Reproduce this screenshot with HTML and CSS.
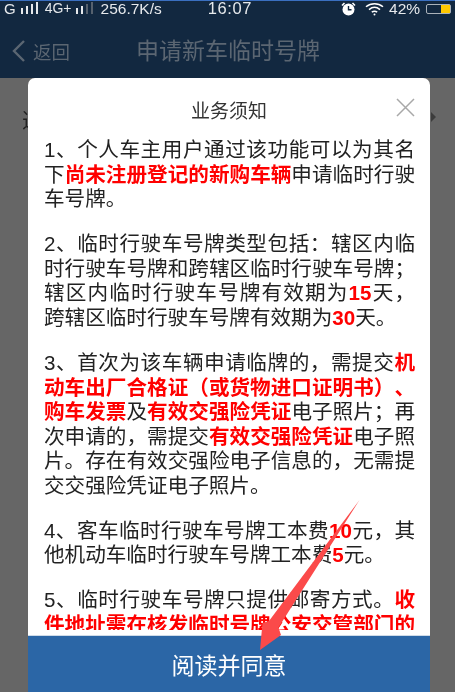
FILE: index.html
```html
<!DOCTYPE html>
<html lang="zh">
<head>
<meta charset="utf-8">
<title>业务须知</title>
<link rel="stylesheet" href="styles.css">
</head>
<body>
<div class="app">
  <header class="top">
    <div class="status">
      <span class="st-g">G</span>
      <svg class="bars bars-a" width="18" height="13" viewBox="0 0 18 13"><rect x="0" y="6" width="2" height="6"/><rect x="5" y="4" width="2" height="8"/><rect x="10" y="2" width="2" height="10"/><rect x="15" y="0" width="2" height="12"/></svg>
      <span class="st-4g">4G+</span>
      <svg class="bars bars-b" width="18" height="13" viewBox="0 0 18 13"><rect x="0" y="6" width="2" height="6"/><rect x="5" y="4" width="2" height="8"/><rect class="off" x="10" y="2" width="2" height="10"/><rect class="off" x="15" y="0" width="2" height="12"/></svg>
      <span class="st-speed">256.7K/s</span>
      <span class="st-time">16:07</span>
      <svg class="st-alarm" width="15" height="14" viewBox="0 0 15 14"><circle cx="7.5" cy="7.5" r="6" fill="#fff"/><path d="M7.5 4v3.8h3" fill="none" stroke="#122840" stroke-width="1.4"/><path d="M1 3.5 3.5 1M14 3.5 11.500 1" stroke="#fff" stroke-width="1.6"/></svg>
      <svg class="st-wifi" width="19" height="14" viewBox="0 0 19 14" fill="none" stroke="#fff" stroke-width="1.5"><path d="M1 4.800C6 .6 13 .6 18 4.800"/><path d="M4 7.600c3.300-2.700 7.700-2.700 11 0"/><path d="M6.800 10.200c1.700-1.300 3.700-1.300 5.400 0"/><circle cx="9.500" cy="12.400" r="1" fill="#fff" stroke="none"/></svg>
      <span class="st-pct">42%</span>
      <span class="battery"><span class="battery-fill"></span></span>
    </div>
    <nav class="nav">
      <svg class="chev" width="14" height="24" viewBox="0 0 14 24" fill="none"><path d="M12 2 2 12l10 10" stroke="#5b6672" stroke-width="2.400"/></svg>
      <span class="back">返回</span>
      <h1 class="nav-title">申请新车临时号牌</h1>
    </nav>
  </header>
  <main class="under">
    <span class="under-text">选</span>
    <span class="under-arrow"></span>
  </main>
  <section class="modal">
    <div class="modal-head">
      <h2 class="modal-title">业务须知</h2>
      <svg class="close" width="19" height="19" viewBox="0 0 19 19"><path d="M1 1l17 17M18 1 1 18" stroke="#a8a8a8" stroke-width="1.500"/></svg>
    </div>
    <div class="modal-body">
      <p class="para">
        <span class="ln">1、个人车主用户通过该功能可以为其名</span>
        <span class="ln">下<b>尚未注册登记的新购车辆</b>申请临时行驶</span>
        <span class="ln end">车号牌。</span>
      </p>
      <p class="para">
        <span class="ln">2、临时行驶车号牌类型包括：辖区内临</span>
        <span class="ln">时行驶车号牌和跨辖区临时行驶车号牌；</span>
        <span class="ln">辖区内临时行驶车号牌有效期为<i>15</i>天，</span>
        <span class="ln end">跨辖区临时行驶车号牌有效期为<i>30</i>天。</span>
      </p>
      <p class="para">
        <span class="ln">3、首次为该车辆申请临牌的，需提交<b>机</b></span>
        <span class="ln"><b>动车出厂合格证（或货物进口证明书）、</b></span>
        <span class="ln"><b>购车发票</b>及<b>有效交强险凭证</b>电子照片；再</span>
        <span class="ln">次申请的，需提交<b>有效交强险凭证</b>电子照</span>
        <span class="ln">片。存在有效交强险电子信息的，无需提</span>
        <span class="ln end">交交强险凭证电子照片。</span>
      </p>
      <p class="para">
        <span class="ln">4、客车临时行驶车号牌工本费<i>10</i>元，其</span>
        <span class="ln end">他机动车临时行驶车号牌工本费<i>5</i>元。</span>
      </p>
      <p class="para">
        <span class="ln">5、临时行驶车号牌只提供邮寄方式。<b>收</b></span>
        <span class="ln"><b>件地址需在核发临时号牌公安交管部门的</b></span>
      </p>
    </div>
    <button class="agree" type="button">阅读并同意</button>
  </section>
  <svg class="arrow" width="455" height="692" viewBox="0 0 455 692"><path d="M359.500 500 278.500 627.500 281 635 260 650 262.500 623 269 621Z" fill="#fb4a4a"/></svg>
</div>
</body>
</html>
```
FILE: styles.css
```css
* { box-sizing: border-box; }
html, body { margin: 0; padding: 0; }
body { width: 455px; height: 692px; overflow: hidden; background: #666; }
.app {
  position: relative; width: 455px; height: 692px; overflow: hidden;
  display: flex; flex-direction: column; background: #666;
  font-family: "Liberation Sans", "Noto Sans CJK SC", sans-serif;
  text-spacing-trim: space-all;
  filter: blur(0.3px);
}
.top { height: 78px; background: #122840; border-top: 1px solid #3a6fc0; flex: none; }
.status { height: 15px; display: flex; align-items: center; color: #e6e9ec; font-size: 15px; line-height: 15px; white-space: nowrap; }
.st-g { margin-left: 4px; }
.bars { fill: #e6e9ec; margin-left: 5px; }
.bars .off { fill: #56616e; }
.st-4g { margin-left: 6px; font-size: 14px; }
.bars-b { margin-left: 4px; }
.st-speed { margin-left: 7px; font-size: 15.500px; }
.st-time { margin-left: 46px; font-size: 16.500px; letter-spacing: 0.600px; }
.st-alarm { margin-left: 89px; }
.st-wifi { margin-left: 9px; }
.st-pct { margin-left: 5px; font-size: 15.500px; }
.battery { width: 25px; height: 10px; margin-left: 6px; border: 1px solid #aab2ba; border-radius: 2px; display: flex; justify-content: flex-end; }
.battery-fill { width: 9px; background: #ffc800; }
.nav { height: 62px; padding: 7px 0 0 12px; display: flex; align-items: center; position: relative; }
.chev { margin-right: 7px; }
.back { font-size: 18.500px; color: #5b6672; }
.nav-title { margin: 0; position: absolute; left: 1px; right: 0; top: 20px; text-align: center; font-size: 23px; line-height: 30px; font-weight: 400; color: #5b6672; }
.under { flex: 1; position: relative; }
.under-text { position: absolute; left: 22px; top: 27px; font-size: 20px; color: #222; }
.under-arrow { position: absolute; left: 431px; top: 34px; width: 0; height: 0; border: 5px solid transparent; border-left-color: #3c3c3c; }
.modal {
  position: absolute; left: 28px; top: 78px; width: 402px; height: 614px;
  background: #fff; border-radius: 7px 7px 0 0; display: flex; flex-direction: column; overflow: hidden;
}
.modal-head { height: 57px; flex: none; position: relative; display: flex; justify-content: center; align-items: center; padding-top: 5px; }
.modal-title { margin: 0; font-size: 19px; font-weight: 400; color: #333; }
.close { position: absolute; right: 15px; top: 20px; }
.modal-body { flex: 1; min-height: 0; overflow: hidden; margin-bottom: 5px; padding: 3px 15px 0 16px; color: #222; font-size: 20.600px; line-height: 24.600px; }
.para { margin: 0 0 20.400px; }
.ln { display: block; text-align: justify; text-align-last: justify; white-space: nowrap; }
.ln.end { text-align-last: left; }
.ln b { color: #f00; font-weight: 700; }
.ln i { color: #f00; font-style: normal; font-weight: 700; }
.agree { height: 57px; flex: none; width: 100%; border: 0; border-top: 1px solid #cfdbe8; padding: 0; background: #2b66a6; color: #fff; font: inherit; font-size: 23px; }
.arrow { position: absolute; left: 0; top: 0; }
```
